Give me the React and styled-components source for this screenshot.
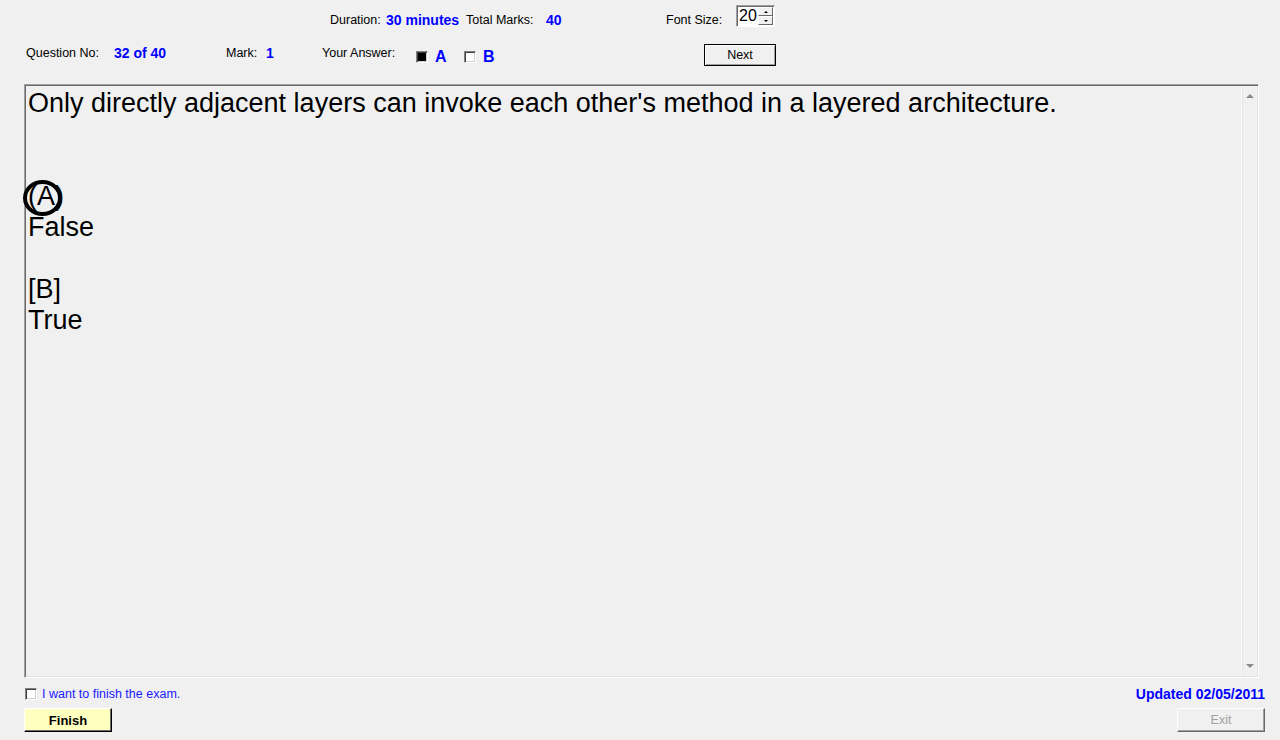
import React from 'react';
import styled, { createGlobalStyle } from 'styled-components';

const GlobalStyle = createGlobalStyle`
  html, body {
    margin: 0;
    padding: 0;
    background: #f0f0f0;
  }
  body {
    font-family: 'Liberation Sans', Arial, sans-serif;
    color: #000;
  }
`;

export default function App() {
  return (
    <Page>
      <GlobalStyle />
      <TopRow>
        <Cell $w={56}>Duration:</Cell>
        <Value $w={80}>30 minutes</Value>
        <Cell $w={80}>Total Marks:</Cell>
        <Value $w={120}>40</Value>
        <Cell $w={70}>Font Size:</Cell>
        <Spinner>
          <SpinValue>20</SpinValue>
          <SpinButtons>
            <SpinButton>
              <Arrow $up />
            </SpinButton>
            <SpinButton>
              <Arrow />
            </SpinButton>
          </SpinButtons>
        </Spinner>
      </TopRow>

      <InfoRow>
        <Cell $w={88} $shift={-2}>Question No:</Cell>
        <Value $w={112} $shift={-2}>32 of 40</Value>
        <Cell $w={40} $shift={-2}>Mark:</Cell>
        <Value $w={56} $shift={-2}>1</Value>
        <Cell $w={94} $shift={-2}>Your Answer:</Cell>
        <Options>
          {answers.map((item) => (
            <Option key={item.letter}>
              <CheckBox $checked={item.checked} />
              <Letter>{item.letter}</Letter>
            </Option>
          ))}
        </Options>
        <NextButton>Next</NextButton>
      </InfoRow>

      <QuestionPanel>
        <QuestionText>
          <Line>Only directly adjacent layers can invoke each other's method in a layered architecture.</Line>
          <Line>&nbsp;</Line>
          <Line>&nbsp;</Line>
          <Line>
            <Marked>
              (A)
              <Circle />
            </Marked>
          </Line>
          <Line>False</Line>
          <Line>&nbsp;</Line>
          <Line>[B]</Line>
          <Line>True</Line>
        </QuestionText>
        <ScrollBar>
          <ScrollArrow $up />
          <ScrollArrow />
        </ScrollBar>
      </QuestionPanel>

      <FooterRow>
        <FinishCheck>
          <CheckBox />
          <FinishLabel>I want to finish the exam.</FinishLabel>
        </FinishCheck>
        <Updated>Updated 02/05/2011</Updated>
      </FooterRow>
      <ButtonRow>
        <FinishButton>Finish</FinishButton>
        <ExitButton disabled>Exit</ExitButton>
      </ButtonRow>
    </Page>
  );
}

const answers = [
  { letter: 'A', checked: true },
  { letter: 'B', checked: false }
];

const Page = styled.div`
  width: 1280px;
  height: 740px;
  display: flex;
  flex-direction: column;
  overflow: hidden;
  background: #f0f0f0;
`;

const TopRow = styled.div`
  display: flex;
  align-items: center;
  height: 22px;
  margin-top: 9px;
  padding-left: 330px;
  font-size: 12.5px;
`;

const InfoRow = styled.div`
  display: flex;
  align-items: center;
  height: 22px;
  margin-top: 13px;
  padding-left: 26px;
  font-size: 12.5px;
`;

const Cell = styled.span`
  width: ${(p) => p.$w}px;
  flex: none;
  white-space: nowrap;
  position: relative;
  top: ${(p) => p.$shift || 0}px;
`;

const Value = styled.span`
  width: ${(p) => p.$w}px;
  flex: none;
  white-space: nowrap;
  position: relative;
  top: ${(p) => p.$shift || 0}px;
  color: #0000ff;
  font-weight: bold;
  font-size: 14px;
`;

const Spinner = styled.div`
  display: flex;
  align-items: stretch;
  width: 39px;
  height: 22px;
  margin-top: -8px;
  box-sizing: border-box;
  background: #fff;
  border: 1px solid;
  border-color: #a0a0a0 #fff #fff #a0a0a0;
  box-shadow: inset 1px 1px #696969;
`;

const SpinValue = styled.span`
  flex: 1;
  padding-left: 2px;
  font-size: 16px;
  line-height: 20px;
`;

const SpinButtons = styled.div`
  display: flex;
  flex-direction: column;
  width: 15px;
  padding: 1px 1px 1px 0;
`;

const SpinButton = styled.div`
  flex: 1;
  display: flex;
  align-items: center;
  justify-content: center;
  background: #f0f0f0;
  border: 1px solid;
  border-color: #fff #696969 #696969 #fff;
`;

const Arrow = styled.span`
  width: 0;
  height: 0;
  border-left: 2px solid transparent;
  border-right: 2px solid transparent;
  ${(p) => (p.$up ? 'border-bottom: 2px solid #000;' : 'border-top: 2px solid #000;')}
`;

const Options = styled.div`
  display: flex;
  align-items: center;
  width: 288px;
  padding-top: 3px;
`;

const Option = styled.div`
  display: flex;
  align-items: center;
  width: 48px;
`;

const CheckBox = styled.span`
  display: inline-block;
  box-sizing: border-box;
  width: 12px;
  height: 12px;
  flex: none;
  border: 1px solid;
  border-color: #808080 #fff #fff #808080;
  box-shadow: inset 1px 1px #404040, inset -1px -1px #d4d0c8;
  background: ${(p) => (p.$checked ? '#000' : '#fff')};
`;

const Letter = styled.span`
  margin-left: 7px;
  color: #0000ff;
  font-weight: bold;
  font-size: 16px;
`;

const NextButton = styled.button`
  width: 72px;
  height: 22px;
  padding: 0;
  box-sizing: border-box;
  font-family: inherit;
  font-size: 12.5px;
  color: #000;
  background: #f0f0f0;
  border: 1px solid #000;
  box-shadow: inset 1px 1px #fff, inset -1px -1px #a0a0a0;
`;

const QuestionPanel = styled.div`
  display: flex;
  width: 1235px;
  height: 594px;
  margin: 18px 0 0 24px;
  box-sizing: border-box;
  border: 1px solid;
  border-color: #a0a0a0 #fff #fff #a0a0a0;
  box-shadow: inset 1px 1px #696969, inset -1px -1px #e3e3e3;
`;

const QuestionText = styled.div`
  flex: 1;
  padding: 3px 0 0 3px;
  font-size: 27px;
  line-height: 31px;
`;

const Line = styled.div`
  white-space: nowrap;
`;

const Marked = styled.span`
  position: relative;
`;

const Circle = styled.span`
  position: absolute;
  left: -5px;
  top: -1px;
  width: 39px;
  height: 36px;
  box-sizing: border-box;
  border: 4px solid #000;
  border-radius: 50%;
`;

const ScrollBar = styled.div`
  width: 15px;
  margin: 2px 1px 2px 0;
  display: flex;
  flex-direction: column;
  justify-content: space-between;
  align-items: center;
  padding: 7px 0;
  background: #f0f0f0;
  border-left: 1px solid #fafafa;
  box-shadow: inset 1px 0 #e6e6e6;
`;

const ScrollArrow = styled.span`
  width: 0;
  height: 0;
  border-left: 4px solid transparent;
  border-right: 4px solid transparent;
  ${(p) => (p.$up ? 'border-bottom: 4px solid #8a8a8a;' : 'border-top: 4px solid #8a8a8a;')}
`;

const FooterRow = styled.div`
  display: flex;
  align-items: center;
  justify-content: space-between;
  height: 18px;
  margin-top: 7px;
  padding: 0 15px 0 25px;
`;

const FinishCheck = styled.label`
  display: flex;
  align-items: center;
  gap: 5px;
`;

const FinishLabel = styled.span`
  color: #1a1aff;
  font-size: 12.5px;
`;

const Updated = styled.span`
  color: #0000ff;
  font-weight: bold;
  font-size: 14px;
`;

const ButtonRow = styled.div`
  display: flex;
  justify-content: space-between;
  margin-top: 5px;
  padding: 0 15px 0 24px;
`;

const BaseButton = styled.button`
  width: 88px;
  height: 24px;
  padding: 0;
  box-sizing: border-box;
  font-family: inherit;
  border: 1px solid;
  border-color: #fff #000 #000 #fff;
  box-shadow: inset -1px -1px #696969;
`;

const FinishButton = styled(BaseButton)`
  background: #ffffc0;
  color: #000;
  font-weight: bold;
  font-size: 13px;
`;

const ExitButton = styled(BaseButton)`
  background: #f0f0f0;
  color: #a0a0a0;
  font-size: 12.5px;
  border-color: #fff #696969 #696969 #fff;
  box-shadow: inset -1px -1px #a0a0a0;
`;
